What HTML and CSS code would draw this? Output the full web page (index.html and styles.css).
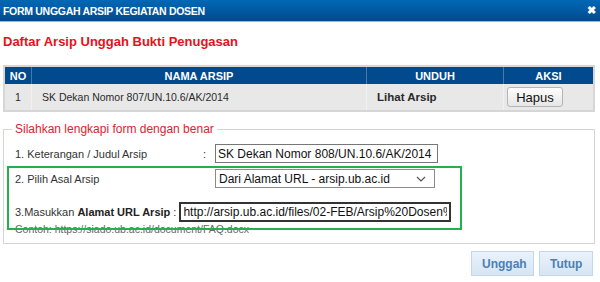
FILE: index.html
```html
<!DOCTYPE html>
<html lang="id">
<head>
  <meta charset="UTF-8">
  <title>Form Unggah Arsip Kegiatan Dosen</title>
  <link rel="stylesheet" href="styles.css">
</head>
<body>

  <div class="dialog">
    <div class="titlebar">
      <span>FORM UNGGAH ARSIP KEGIATAN DOSEN</span>
      <span class="close">&#10006;</span>
    </div>

    <div class="content">
      <h2>Daftar Arsip Unggah Bukti Penugasan</h2>

      <table class="arsip">
        <thead>
          <tr>
            <th class="no">NO</th>
            <th>NAMA ARSIP</th>
            <th class="unduh">UNDUH</th>
            <th class="aksi">AKSI</th>
          </tr>
        </thead>
        <tbody>
          <tr>
            <td class="no">1</td>
            <td>SK Dekan Nomor 807/UN.10.6/AK/2014</td>
            <td class="link">Lihat Arsip</td>
            <td class="aksi"><button class="hapus">Hapus</button></td>
          </tr>
        </tbody>
      </table>

      <fieldset class="upload">
        <legend>Silahkan lengkapi form dengan benar</legend>

        <div class="row">
          <label>1. Keterangan / Judul Arsip</label>
          <span class="colon">:</span>
          <input type="text" class="judul" value="SK Dekan Nomor 808/UN.10.6/AK/2014">
        </div>

        <div class="row">
          <label>2. Pilih Asal Arsip</label>
          <span class="colon"></span>
          <div class="select">
            <span>Dari Alamat URL - arsip.ub.ac.id</span>
            <svg width="10" height="6" viewBox="0 0 10 6"><path d="M1 1l4 4 4-4" fill="none" stroke="#555" stroke-width="1.2"/></svg>
          </div>
        </div>

        <div class="row url">
          <label>3.Masukkan <b>Alamat URL Arsip</b> :</label>
          <input type="text" class="alamat" value="http://arsip.ub.ac.id/files/02-FEB/Arsip%20Dosen%20FEB">
        </div>

        <p class="contoh">Contoh: https://siado.ub.ac.id/document/FAQ.docx</p>

        <div class="highlight"></div>
      </fieldset>

      <div class="actions">
        <button class="btn">Unggah</button>
        <button class="btn">Tutup</button>
      </div>
    </div>
  </div>

</body>
</html>
```

FILE: styles.css
```css
body {
  margin: 0;
  font-family: 'Liberation Sans', Arial, sans-serif;
  background: #fff;
  color: #222;
}

.dialog {
  width: 600px;
  height: 282px;
  overflow: hidden;
}

.titlebar {
  display: flex;
  justify-content: space-between;
  align-items: center;
  height: 21px;
  padding: 0 4px 0 3px;
  background: linear-gradient(#0068b5, #004a8e);
  border-bottom: 1px solid #9fb6cf;
  color: #fff;
  font-size: 10.5px;
  letter-spacing: -0.3px;
  font-weight: bold;
}

.close {
  font-size: 11px;
}

.content {
  padding: 0 5px 0 3px;
}

h2 {
  margin: 12px 0 0;
  font-size: 13px;
  color: #e8101c;
}

.arsip {
  width: 100%;
  margin-top: 16px;
  border-collapse: collapse;
  border: 2px solid #d6d6d6;
  font-size: 10.5px;
}

.arsip th {
  height: 17px;
  padding: 0;
  background: #004a8d;
  color: #fff;
  font-size: 11px;
  border-left: 1px solid #4f77a6;
}

.arsip th:first-child {
  border-left: none;
}

.arsip td {
  height: 26px;
  padding: 0 0 0 10px;
  background: #e8e8e8;
  color: #2a2a2a;
  border-left: 1px solid #f2f2f2;
}

.arsip td:first-child {
  border-left: none;
}

.arsip .no {
  width: 26px;
  text-align: center;
  padding: 0;
}

.arsip .unduh {
  width: 136px;
}

.arsip .aksi {
  width: 86px;
  text-align: center;
  padding: 0;
}

.arsip td.aksi {
  text-align: left;
  padding-left: 3px;
}

.arsip .link {
  font-weight: bold;
  font-size: 11.5px;
}

.hapus {
  font-family: 'Liberation Sans', Arial, sans-serif;
  font-size: 13px;
  width: 56px;
  height: 20px;
  padding: 0;
  border: 1px solid #b5b5b5;
  border-radius: 3px;
  background: linear-gradient(#fdfdfd, #e6e6e6);
  color: #111;
}

.upload {
  position: relative;
  margin: 10px 0 0;
  padding: 8px 10px 10px;
  border: 1px solid #d4d4d4;
  height: 102px;
}

.upload legend {
  margin-left: -2px;
  padding: 0 3px;
  color: #d8242e;
  font-size: 12px;
}

.row {
  display: flex;
  align-items: center;
  font-size: 11px;
  color: #333;
}

.row label {
  width: 188px;
  padding-left: 1px;
}

.colon {
  width: 12px;
}

.row + .row {
  margin-top: 6px;
}

.row.url {
  margin-top: 14px;
}

.row.url label {
  width: auto;
  margin-right: 3px;
}

.row.url b {
  color: #222;
}

input {
  font-family: 'Liberation Sans', Arial, sans-serif;
  font-size: 12px;
  color: #111;
  border: 1px solid #444;
  height: 19px;
  padding: 0 2px;
  box-sizing: border-box;
}

.judul {
  width: 223px;
  border-color: #777;
}

.alamat {
  width: 272px;
  border: 2px solid #333;
  height: 20px;
}

.select {
  display: flex;
  justify-content: space-between;
  align-items: center;
  width: 220px;
  height: 19px;
  padding: 0 8px 0 3px;
  box-sizing: border-box;
  border: 1px solid #8a8a8a;
  font-size: 12px;
  color: #111;
}

.contoh {
  margin: 1px 0 0;
  font-size: 10.5px;
  color: #666;
  padding-left: 1px;
}

.highlight {
  position: absolute;
  left: 3px;
  top: 30px;
  width: 451px;
  height: 60px;
  border: 2px solid #22b14c;
}

.actions {
  display: flex;
  justify-content: flex-end;
  gap: 5px;
  margin-top: 7px;
  padding-right: 2px;
}

.btn {
  font-family: 'Liberation Sans', Arial, sans-serif;
  font-size: 12px;
  font-weight: bold;
  color: #4d7fb3;
  background: linear-gradient(#eaf2fb, #d6e5f4);
  border: 1px solid #c3d7ec;
  height: 25px;
  padding: 0 10px;
}

.btn:first-child {
  width: 63px;
}

.btn:last-child {
  width: 54px;
}
```
